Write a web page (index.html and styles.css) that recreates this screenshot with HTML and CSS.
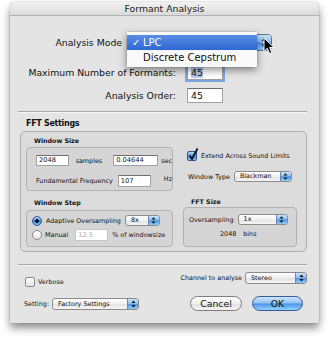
FILE: index.html
```html
<!DOCTYPE html>
<html>
<head>
  <meta charset="UTF-8">
  <title>Formant Analysis</title>
  <link rel="stylesheet" href="styles.css">
</head>
<body>
  <div class="window">
    <div class="titlebar">Formant Analysis</div>

    <div class="row mode-row">
      <span class="label mode-label">Analysis Mode</span>
      <!-- the popup's own label is hidden under the open menu -->
      <div class="popup big-popup">
        <span class="popup-text"></span>
        <span class="arrows"><svg width="14" height="15" viewBox="0 0 14 15"><path d="M4.5 6 L7 2.5 L9.5 6Z M4.5 9 L7 12.5 L9.5 9Z" fill="#111"/></svg></span>
      </div>
    </div>

    <div class="row field-row formants-row">
      <span class="label field-label">Maximum Number of Formants:</span>
      <span class="field focused"><span class="sel">45</span></span>
    </div>

    <div class="row field-row order-row">
      <span class="label field-label">Analysis Order:</span>
      <span class="field">45</span>
    </div>

    <div class="separator"></div>

    <div class="group-title">FFT Settings</div>
    <div class="fft-group">
      <div class="fft-left">
        <div class="box-title">Window Size</div>
        <div class="box ws-box">
          <div class="row ws-row-a">
            <span class="small-field w34">2048</span>
            <span class="small ml7">samples</span>
            <span class="small-field w47 ml11">0.04644</span>
            <span class="small ml3">sec</span>
          </div>
          <div class="row ws-row-b">
            <span class="small">Fundamental Frequency</span>
            <span class="small-field w33 tall ml5">107</span>
            <span class="small raised ml13">Hz</span>
          </div>
        </div>

        <div class="box-title step-title">Window Step</div>
        <div class="box step-box">
          <div class="row step-row-a">
            <span class="radio on"></span>
            <span class="small ml4">Adaptive Oversampling</span>
            <div class="popup small-popup w35 ml4">
              <span class="popup-text">8x</span>
              <span class="arrows"><svg width="9" height="9" viewBox="0 0 9 9"><path d="M2.5 3.6 L4.5 1.2 L6.5 3.6Z M2.5 5.4 L4.5 7.8 L6.5 5.4Z" fill="#111"/></svg></span>
            </div>
          </div>
          <div class="row step-row-b">
            <span class="radio"></span>
            <span class="small ml3">Manual</span>
            <span class="small-field w33 tall ml7 disabled">12.5</span>
            <span class="small ml4">% of windowsize</span>
          </div>
        </div>
      </div>

      <div class="fft-right">
        <div class="row check-row">
          <span class="checkbox on">
            <svg width="12" height="14" viewBox="0 0 12 14"><path d="M2.5 7.5 L5 11 L10.5 0.5" fill="none" stroke="#111" stroke-width="1.8"/></svg>
          </span>
          <span class="small ml4">Extend Across Sound Limits</span>
        </div>
        <div class="row type-row">
          <span class="small">Window Type</span>
          <div class="popup small-popup w58 ml4">
            <span class="popup-text">Blackman</span>
            <span class="arrows"><svg width="9" height="9" viewBox="0 0 9 9"><path d="M2.5 3.6 L4.5 1.2 L6.5 3.6Z M2.5 5.4 L4.5 7.8 L6.5 5.4Z" fill="#111"/></svg></span>
          </div>
        </div>
        <div class="box-title size-title">FFT Size</div>
        <div class="box size-box">
          <div class="row over-row">
            <span class="small">Oversampling</span>
            <div class="popup small-popup w50 ml4">
              <span class="popup-text">1x</span>
              <span class="arrows"><svg width="9" height="9" viewBox="0 0 9 9"><path d="M2.5 3.6 L4.5 1.2 L6.5 3.6Z M2.5 5.4 L4.5 7.8 L6.5 5.4Z" fill="#111"/></svg></span>
            </div>
          </div>
          <div class="row bins-row">
            <span class="small">2048</span>
            <span class="small ml7">bins</span>
          </div>
        </div>
      </div>
    </div>

    <div class="separator bottom-sep"></div>

    <div class="row bottom-row-a">
      <div class="row verbose">
        <span class="checkbox"></span>
        <span class="small ml3">Verbose</span>
      </div>
      <div class="row channel">
        <span class="small">Channel to analyse</span>
        <div class="popup small-popup w62 tall ml3">
          <span class="popup-text">Stereo</span>
          <span class="arrows"><svg width="9" height="10" viewBox="0 0 9 10"><path d="M2.5 4 L4.5 1.5 L6.5 4Z M2.5 6 L4.5 8.5 L6.5 6Z" fill="#111"/></svg></span>
        </div>
      </div>
    </div>

    <div class="row bottom-row-b">
      <span class="small setting-label">Setting:</span>
      <div class="popup small-popup w87 tall ml3">
        <span class="popup-text">Factory Settings</span>
        <span class="arrows"><svg width="9" height="10" viewBox="0 0 9 10"><path d="M2.5 4 L4.5 1.5 L6.5 4Z M2.5 6 L4.5 8.5 L6.5 6Z" fill="#111"/></svg></span>
      </div>
      <button class="btn cancel-btn">Cancel</button>
      <button class="btn ok-btn">OK</button>
    </div>

    <!-- open popup menu for Analysis Mode -->
    <div class="menu">
      <div class="menu-item selected"><span class="check">✓</span>LPC</div>
      <div class="menu-item"><span class="check"></span>Discrete Cepstrum</div>
    </div>

    <svg class="cursor" width="12" height="18" viewBox="0 0 12 18">
      <path d="M1 1 L1 14.5 L4.3 11.3 L6.6 16.5 L8.8 15.6 L6.6 10.5 L11 10.5 Z" fill="#000" stroke="#fff" stroke-width="1"/>
    </svg>
  </div>
</body>
</html>
```

FILE: styles.css
```css
body {
  margin: 0;
  width: 329px;
  height: 344px;
  overflow: hidden;
  background-color: #fff;
  font-family: "DejaVu Sans", sans-serif;
  color: #111;
}
.window {
  position: relative;
  width: 309px;
  height: 321px;
  margin: 2px 0 0 10px;
  background-color: #e4e4e4;
  border-radius: 5px 5px 0 0;
  box-shadow: 0 5px 9px rgba(0, 0, 0, 0.45), 0 0 1px rgba(0, 0, 0, 0.5);
  font-size: 9.3px;
}
.titlebar {
  height: 13px;
  line-height: 13px;
  text-align: center;
  background: linear-gradient(#f2f2f2, #dadada);
  border-bottom: 1px solid #b2b2b2;
  border-radius: 5px 5px 0 0;
  color: #1a1a1a;
}
.row {
  display: flex;
  align-items: center;
}
.label {
  white-space: nowrap;
}
.small {
  font-size: 6.4px;
  white-space: nowrap;
}
.raised {
  align-self: flex-start;
}
.ml3 { margin-left: 3px; }
.ml4 { margin-left: 4px; }
.ml5 { margin-left: 5px; }
.ml7 { margin-left: 7px; }
.ml11 { margin-left: 11px; }
.ml13 { margin-left: 13px; }
.w33 { width: 33px; }
.w34 { width: 34px; }
.w35 { width: 35px; }
.w47 { width: 47px; }
.w50 { width: 50px; }
.w58 { width: 58px; }
.w62 { width: 62px; }
.w87 { width: 87px; }

/* top rows */
.mode-row {
  margin-top: 18px;
  height: 17px;
}
.mode-label {
  width: 112px;
  text-align: right;
}
.field-row {
  height: 15px;
}
.formants-row {
  margin-top: 14px;
}
.order-row {
  margin-top: 8px;
}
.field-label {
  width: 166px;
  text-align: right;
}
.field {
  margin-left: 11px;
  width: 36px;
  height: 15px;
  box-sizing: border-box;
  border: 1px solid #a0a0a0;
  border-top-color: #6c6c6c;
  background-color: #fff;
  padding-left: 3px;
  line-height: 13px;
}
.field.focused {
  box-shadow: 0 0 0 2px rgba(92, 145, 220, 0.75);
}
.sel {
  background-color: #b6cdf0;
}
.separator {
  border-top: 1px solid #a9a9a9;
  border-bottom: 1px solid #f5f5f5;
  margin: 8px 12px 0 8px;
}

/* popups */
.popup {
  display: flex;
  box-sizing: border-box;
  border: 1px solid #8c8c8c;
  border-radius: 3px;
  background: linear-gradient(#ffffff, #f0f0f0 50%, #e2e2e2 51%, #f6f6f6);
  overflow: hidden;
}
.popup-text {
  flex: 1;
  white-space: nowrap;
}
.arrows {
  display: flex;
  align-items: center;
  justify-content: center;
  border-left: 1px solid #6f86ad;
  background: linear-gradient(#cbe3fb, #8dc0f3 45%, #4d93e6 52%, #8ecbfa);
}
.big-popup {
  margin-left: 6px;
  width: 144px;
  height: 17px;
  border-color: #5c6f93;
  border-radius: 4px;
}
.big-popup .arrows {
  width: 14px;
}
.small-popup {
  height: 11px;
  font-size: 6.4px;
  line-height: 9px;
}
.small-popup.tall {
  height: 12px;
  line-height: 10px;
}
.small-popup .popup-text {
  padding-left: 5px;
}
.small-popup .arrows {
  width: 10px;
}

/* fields */
.small-field {
  box-sizing: border-box;
  height: 11px;
  border: 1px solid #a0a0a0;
  border-top-color: #707070;
  background-color: #fff;
  padding-left: 2px;
  font-size: 6.7px;
  line-height: 9px;
  white-space: nowrap;
}
.small-field.tall {
  height: 12px;
  line-height: 11px;
}
.small-field.disabled {
  color: #a8a8a8;
  border-color: #c4c4c4;
}

/* FFT group */
.group-title {
  margin: 5px 0 0 16px;
  height: 12px;
  line-height: 12px;
  font-weight: bold;
  font-size: 8px;
  letter-spacing: -0.3px;
}
.fft-group {
  display: flex;
  margin: 1px 12px 0 10px;
  height: 121px;
  box-sizing: border-box;
  border: 1px solid #afafaf;
  border-radius: 5px;
  background-color: #dcdcdc;
}
.fft-left {
  width: 147px;
  margin-left: 5px;
  padding-top: 3px;
}
.box-title {
  height: 12px;
  line-height: 12px;
  padding-left: 8px;
  font-weight: bold;
  font-size: 6.3px;
  white-space: nowrap;
}
.box {
  box-sizing: border-box;
  border: 1px solid #b2b2b2;
  border-radius: 4px;
  background-color: #d5d5d5;
}
.ws-box {
  height: 44px;
}
.ws-row-a {
  margin: 7px 0 0 9px;
  height: 11px;
}
.ws-row-b {
  margin: 9px 0 0 9px;
  height: 12px;
}
.step-title {
  margin-top: 6px;
}
.step-box {
  margin-top: 1px;
  height: 37px;
}
.step-row-a {
  margin: 4px 0 0 5px;
  height: 11px;
}
.step-row-b {
  margin: 3px 0 0 5px;
  height: 12px;
}
.radio {
  box-sizing: border-box;
  width: 10px;
  height: 10px;
  border-radius: 50%;
  border: 1px solid #8a8a8a;
  background: linear-gradient(#ffffff, #e6e6e6);
  flex-shrink: 0;
}
.radio.on {
  border-color: #2e5a9c;
  background: radial-gradient(circle, #111 0, #111 1.6px, transparent 2px),
              linear-gradient(#a9d1f8, #3d86e0 55%, #7cc0fa);
}
.checkbox {
  position: relative;
  box-sizing: border-box;
  width: 10px;
  height: 10px;
  border: 1px solid #8a8a8a;
  border-radius: 2px;
  background: linear-gradient(#ffffff, #e4e4e4);
  flex-shrink: 0;
}
.checkbox.on {
  border-color: #2e5a9c;
  background: linear-gradient(#b3d7fa, #4b90e4 55%, #86c6fb);
}
.checkbox svg {
  position: absolute;
  left: -1px;
  top: -4px;
}
.fft-right {
  width: 114px;
  margin-left: 10px;
}
.check-row {
  margin-top: 18px;
  height: 11px;
  padding-left: 4px;
}
.type-row {
  margin-top: 10px;
  height: 11px;
  padding-left: 5px;
}
.size-title {
  margin-top: 14px;
  height: 11px;
  line-height: 11px;
}
.size-box {
  height: 40px;
}
.over-row {
  margin: 6px 0 0 5px;
  height: 11px;
}
.bins-row {
  margin: 3px 0 0 36px;
  height: 11px;
}

/* bottom */
.bottom-sep {
  margin-top: 12px;
}
.bottom-row-a {
  margin-top: 6px;
  height: 12px;
  align-items: flex-start;
}
.verbose {
  margin: 5px 0 0 15px;
  height: 10px;
}
.channel {
  margin-left: auto;
  margin-right: 12px;
  height: 12px;
}
.bottom-row-b {
  margin-top: 12px;
  height: 15px;
}
.setting-label {
  margin-left: 14px;
}
.btn {
  box-sizing: border-box;
  height: 15px;
  padding: 0;
  border-radius: 8px;
  font-family: "DejaVu Sans", sans-serif;
  font-size: 9.3px;
  line-height: 13px;
  color: #111;
}
.cancel-btn {
  margin-left: auto;
  width: 52px;
  border: 1px solid #7c7c7c;
  background: linear-gradient(#ffffff, #f0f0f0 50%, #dcdcdc 51%, #f7f7f7);
}
.ok-btn {
  margin-left: 10px;
  margin-right: 16px;
  width: 51px;
  border: 1px solid #36599a;
  background: linear-gradient(#cfe6fc, #8cc0f2 48%, #4a92e6 52%, #93d3ff);
}

/* open menu */
.menu {
  position: absolute;
  left: 117px;
  top: 30px;
  width: 130px;
  padding: 3px 0;
  background-color: rgba(250, 250, 250, 0.97);
  box-shadow: 0 3px 8px rgba(0, 0, 0, 0.45), 0 0 1px rgba(0, 0, 0, 0.4);
  font-size: 10px;
}
.menu-item {
  display: flex;
  align-items: center;
  height: 14px;
  padding-left: 5px;
  white-space: nowrap;
}
.menu-item.selected {
  height: 15px;
  background: linear-gradient(#5a8ce3, #2e68d3);
  color: #fff;
}
.check {
  width: 11px;
}
.cursor {
  position: absolute;
  left: 253px;
  top: 35px;
}
```
